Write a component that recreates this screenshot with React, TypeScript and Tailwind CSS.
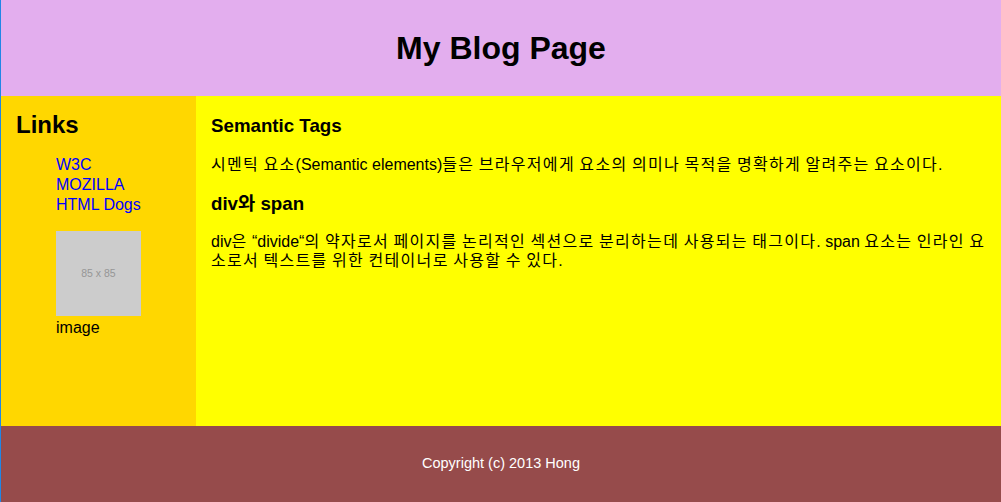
import React from "react";

// Hangul runs get a little extra tracking so the lines measure out like the original page.
const Mixed: React.FC<{ text: string }> = ({ text }) => (
    <>
        {text.split(/([\uAC00-\uD7A3]+)/).map((part, i) =>
            /[\uAC00-\uD7A3]/.test(part) ? (
                <span key={i} className="tracking-[1.3px]">
                    {part}
                </span>
            ) : (
                <span key={i}>{part}</span>
            )
        )}
    </>
);

const App: React.FC = () => {
    const links = ["W3C", "MOZILLA", "HTML Dogs"];

    return (
        <div
            className="flex h-[502px] w-[1001px] border-l border-[#2186e6] text-black"
            style={{ fontFamily: '"Liberation Sans", "Noto Sans CJK KR", sans-serif' }}
        >
            <div className="flex flex-1 flex-col">
                <header className="flex h-[96px] items-center justify-center bg-[#e3aeee]">
                    <h1 className="text-[32px] font-bold leading-[37px]">My Blog Page</h1>
                </header>

                <div className="flex h-[330px]">
                    <nav className="w-[195px] bg-[#ffd700] px-[15px] pt-[15px]">
                        <h2 className="text-[24px] font-bold leading-[28px]">Links</h2>
                        <ul className="mt-[16px] pl-[40px] text-[16px] leading-[20px]">
                            {links.map((link) => (
                                <li key={link}>
                                    <a href="#" className="text-[#0000ff]">
                                        {link}
                                    </a>
                                </li>
                            ))}
                        </ul>
                        <div className="mt-[16px] pl-[40px]">
                            <div className="flex h-[85px] w-[85px] items-center justify-center bg-[#cccccc] text-[10.5px] text-[#969696]">
                                85 x 85
                            </div>
                            <p className="mt-[2px] text-[16px] leading-[20px]">image</p>
                        </div>
                    </nav>

                    <main className="flex-1 bg-[#ffff00] px-[15px] pt-[19px]">
                        <h3 className="text-[18.72px] font-bold leading-[22px]">Semantic Tags</h3>
                        <p className="mt-[18px] text-[16px] leading-[19px]">
                            <Mixed text="시멘틱 요소(Semantic elements)들은 브라우저에게 요소의 의미나 목적을 명확하게 알려주는 요소이다." />
                        </p>
                        <h3 className="mt-[19px] text-[18.72px] font-bold leading-[22px]">div와 span</h3>
                        <p className="mt-[17px] text-[16px] leading-[19px]">
                            <Mixed text="div은 “divide“의 약자로서 페이지를 논리적인 섹션으로 분리하는데 사용되는 태그이다. span 요소는 인라인 요소로서 텍스트를 위한 컨테이너로 사용할 수 있다." />
                        </p>
                    </main>
                </div>

                <footer className="flex h-[76px] items-center justify-center bg-[#964b4b] text-[14.5px] text-white">
                    Copyright (c) 2013 Hong
                </footer>
            </div>
        </div>
    );
};

export default App;
